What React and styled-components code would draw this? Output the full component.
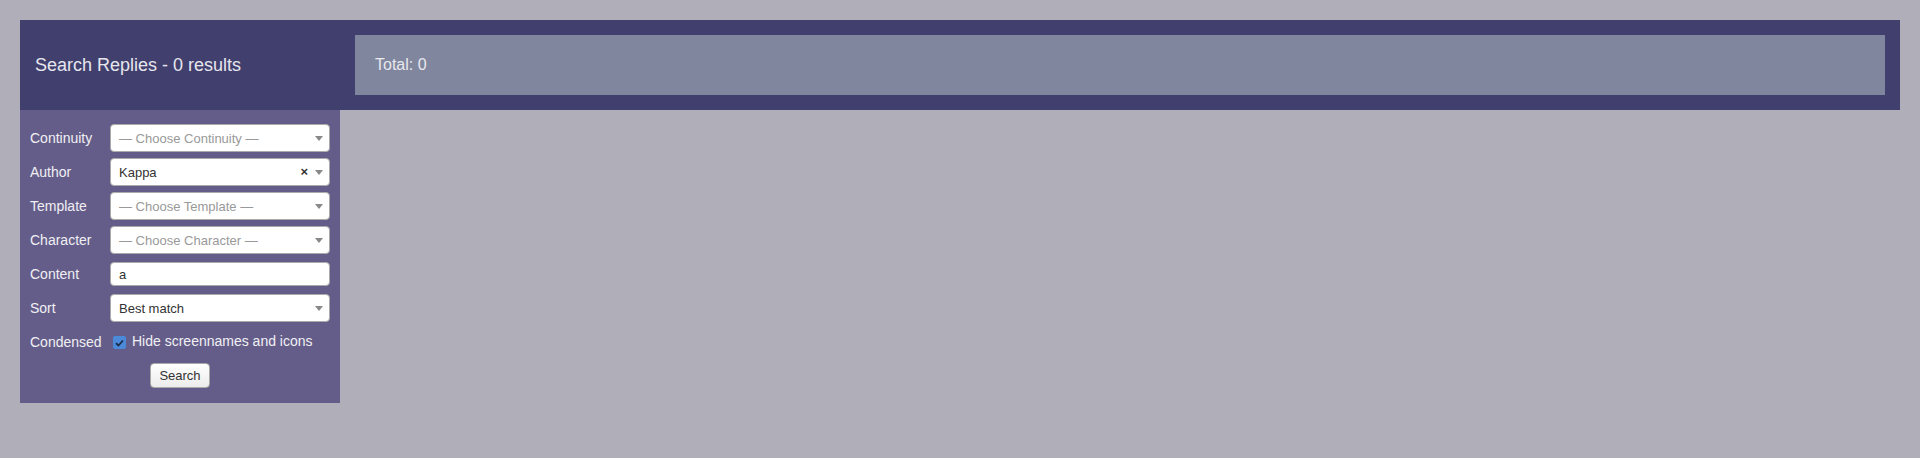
import React from 'react'
import styled, { createGlobalStyle } from 'styled-components'

const GlobalStyle = createGlobalStyle`
  html, body {
    margin: 0;
    padding: 0;
    background: #b0aeb8;
    font-family: 'Liberation Sans', Arial, sans-serif;
  }
`

const Page = styled.div`
  padding: 20px;
  min-height: 418px;
`

const Header = styled.div`
  display: flex;
  align-items: stretch;
  height: 90px;
  background: #413f6d;
`

const Title = styled.div`
  width: 320px;
  box-sizing: border-box;
  padding-left: 15px;
  display: flex;
  align-items: center;
  font-size: 18px;
  color: #e6e6ee;
`

const TotalBox = styled.div`
  flex: 1;
  margin: 15px;
  background: #81869f;
  display: flex;
  align-items: center;
  padding-left: 20px;
  font-size: 16px;
  color: #e8e8ee;
`

const Sidebar = styled.form`
  width: 320px;
  box-sizing: border-box;
  background: #655d89;
  padding: 11px 10px 15px 10px;
`

const Row = styled.div`
  display: flex;
  align-items: center;
  height: 34px;
`

const Label = styled.div`
  width: 80px;
  flex-shrink: 0;
  font-size: 14px;
  color: #f0f0f4;
`

const SelectBox = styled.div`
  position: relative;
  width: 220px;
  height: 28px;
  box-sizing: border-box;
  background: #fff;
  border: 1px solid #aaa;
  border-radius: 4px;
  display: flex;
  align-items: center;
  padding-left: 8px;
  font-size: 13px;
  color: ${(p) => (p.$placeholder ? '#999' : '#333')};
`

const Arrow = styled.span`
  position: absolute;
  right: 6px;
  top: 11px;
  width: 0;
  height: 0;
  border-left: 4px solid transparent;
  border-right: 4px solid transparent;
  border-top: 5px solid #888;
`

const Clear = styled.span`
  position: absolute;
  right: 21px;
  top: 5px;
  font-size: 13px;
  font-weight: bold;
  color: #333;
`

const TextInput = styled.input`
  width: 220px;
  height: 24px;
  box-sizing: border-box;
  border: 1px solid #aaa;
  border-radius: 4px;
  padding: 0 8px;
  font-family: inherit;
  font-size: 13px;
  color: #333;
  outline: none;
`

const CheckLabel = styled.label`
  display: flex;
  align-items: center;
  gap: 6px;
  font-size: 14px;
  color: #f0f0f4;
  margin-left: 3px;
  margin-top: -2px;
`

const CheckBox = styled.span`
  width: 13px;
  height: 13px;
  border-radius: 2px;
  background: #4a8ad9;
  display: inline-flex;
  align-items: center;
  justify-content: center;
  margin-top: 3px;
`

const ButtonRow = styled.div`
  display: flex;
  justify-content: center;
  margin-top: 4px;
`

const Button = styled.button`
  height: 25px;
  width: 60px;
  box-sizing: border-box;
  border: 1px solid #a9a9a9;
  border-radius: 4px;
  background: linear-gradient(#ffffff, #ececec);
  font-family: inherit;
  font-size: 13px;
  color: #333;
  padding: 0;
`

function Select({ value, placeholder, clearable }) {
  return (
    <SelectBox $placeholder={!value}>
      {value || placeholder}
      {clearable && <Clear>×</Clear>}
      <Arrow />
    </SelectBox>
  )
}

export default function App() {
  return (
    <Page>
      <GlobalStyle />
      <Header>
        <Title>Search Replies - 0 results</Title>
        <TotalBox>Total: 0</TotalBox>
      </Header>
      <Sidebar onSubmit={(e) => e.preventDefault()}>
        <Row>
          <Label>Continuity</Label>
          <Select placeholder="— Choose Continuity —" />
        </Row>
        <Row>
          <Label>Author</Label>
          <Select value="Kappa" clearable />
        </Row>
        <Row>
          <Label>Template</Label>
          <Select placeholder="— Choose Template —" />
        </Row>
        <Row>
          <Label>Character</Label>
          <Select placeholder="— Choose Character —" />
        </Row>
        <Row>
          <Label>Content</Label>
          <TextInput defaultValue="a" />
        </Row>
        <Row>
          <Label>Sort</Label>
          <Select value="Best match" />
        </Row>
        <Row>
          <Label>Condensed</Label>
          <CheckLabel>
            <CheckBox>
              <svg width="9" height="8" viewBox="0 0 9 8">
                <path d="M1 4.2 L3.4 6.5 L8 1.5" fill="none" stroke="#1d2a44" strokeWidth="1.8" />
              </svg>
            </CheckBox>
            Hide screennames and icons
          </CheckLabel>
        </Row>
        <ButtonRow>
          <Button type="submit">Search</Button>
        </ButtonRow>
      </Sidebar>
    </Page>
  )
}
